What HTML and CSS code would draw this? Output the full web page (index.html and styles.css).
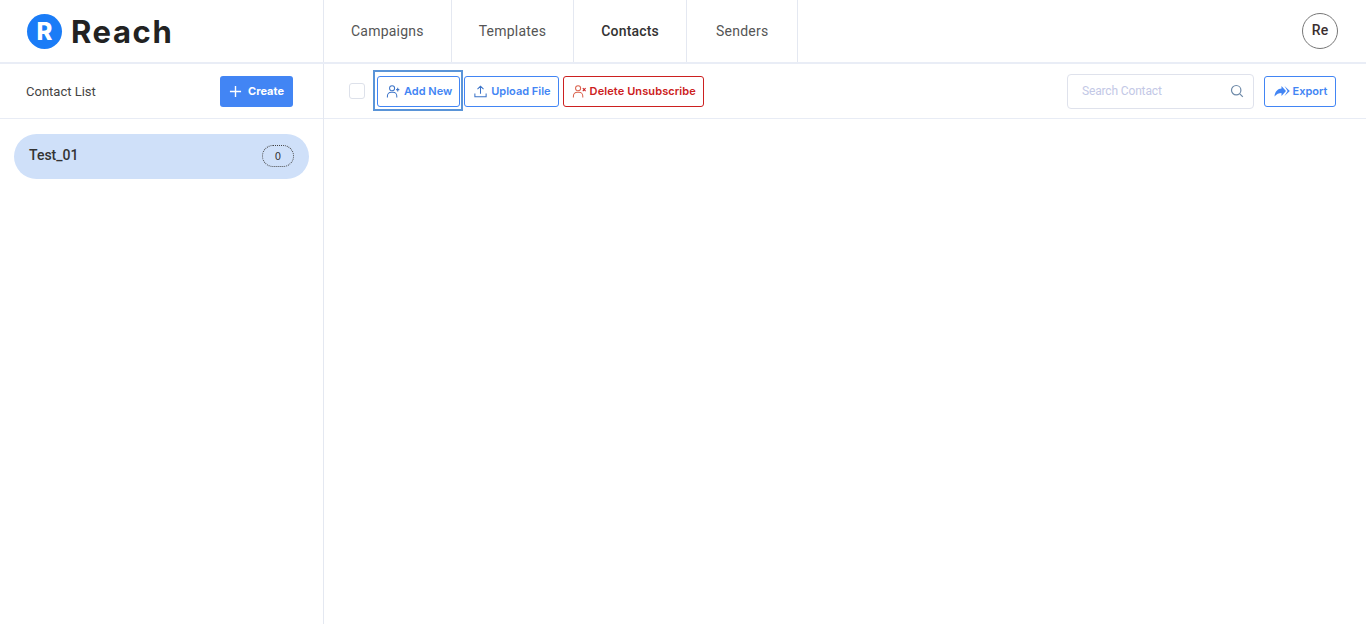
FILE: index.html
```html
<!DOCTYPE html>
<html lang="en">
<head>
<meta charset="utf-8">
<title>Reach Contacts</title>
<link rel="stylesheet" href="styles.css">
</head>
<body>
<header class="topbar">
  <div class="brand">
    <span class="brand-mark">R</span>
    <span class="brand-name">Reach</span>
  </div>
  <nav class="nav">
    <a class="nav-item">Campaigns</a>
    <a class="nav-item">Templates</a>
    <a class="nav-item active">Contacts</a>
    <a class="nav-item">Senders</a>
  </nav>
  <div class="avatar">Re</div>
</header>
<main class="main">
  <aside class="sidebar">
    <div class="side-head">
      <span class="side-title">Contact List</span>
      <button class="btn-create">
        <svg class="ico-plus" viewBox="0 0 14 14"><path d="M7 1v12M1 7h12"/></svg>
        Create
      </button>
    </div>
    <div class="list">
      <div class="list-item">
        <span class="list-name">Test_01</span>
        <span class="badge">0</span>
      </div>
    </div>
  </aside>
  <section class="content">
    <div class="toolbar">
      <span class="check"></span>
      <span class="focus-ring">
        <button class="btn btn-blue">
          <svg class="ico" viewBox="0 0 16 16"><circle cx="6.5" cy="4.5" r="2.7"/><path d="M1.500 14.500v-1.800a4 4 0 0 1 4-4h2a4 4 0 0 1 4 4v1.800M12.500 4v4M10.800 6h3.400"/></svg>
          Add New
        </button>
      </span>
      <button class="btn btn-blue">
        <svg class="ico" viewBox="0 0 16 16"><path d="M8 10.500V2.500M4.800 5.500 8 2.300l3.200 3.200M2 10v3.500h12V10"/></svg>
        Upload File
      </button>
      <button class="btn btn-red">
        <svg class="ico ico-peach" viewBox="0 0 16 16"><circle cx="6.500" cy="4.500" r="2.700"/><path d="M1.500 14.500v-1.800a4 4 0 0 1 4-4h2a4 4 0 0 1 4 4v1.800"/><path class="x" d="m11.500 4.500 3 3M14.500 4.500l-3 3"/></svg>
        Delete Unsubscribe
      </button>
      <div class="spacer"></div>
      <label class="search">
        <span class="search-text">Search Contact</span>
        <svg class="ico-search" viewBox="0 0 14 14"><circle cx="6.200" cy="6.200" r="4.700"/><path d="m9.800 9.800 3 3"/></svg>
      </label>
      <button class="btn btn-blue btn-export">
        <svg class="ico-export" viewBox="0 0 16 12"><path d="M0.500 11.500C0.800 6.500 4 3.500 7.500 3.500V1L12 6l-4.500 5V8C5 8 2.500 9 0.500 11.500Z"/><path d="M10.500 1 15.800 6l-5.300 5L13.600 6Z"/></svg>
        Export
      </button>
    </div>
  </section>
</main>
</body>
</html>
```
FILE: styles.css
```css
* { box-sizing: border-box; }
html, body { height: 100%; }
body {
  margin: 0;
  background: #fff;
  font-family: Roboto, "Liberation Sans", sans-serif;
  color: #2b2b2b;
  overflow: hidden;
  display: flex;
  flex-direction: column;
}
.topbar {
  height: 64px;
  flex: none;
  display: flex;
  align-items: stretch;
  border-bottom: 2px solid #e9edf6;
}
.brand {
  width: 323px;
  flex: none;
  display: flex;
  align-items: center;
  gap: 9px;
  padding: 1px 0 0 27px;
}
.brand-mark {
  width: 35px;
  height: 35px;
  border-radius: 50%;
  background: #1a7cf7;
  color: #fff;
  font: 800 24px/35px Inter, sans-serif;
  text-align: center;
}
.brand-name {
  font: 700 31px/33px Inter, sans-serif;
  letter-spacing: 1.6px;
  color: #222;
}
.nav { display: flex; border-right: 1px solid #e4e8f1; }
.nav-item {
  display: flex;
  align-items: center;
  padding: 0 27px;
  font-size: 14px;
  letter-spacing: 0.22px;
  color: #555;
  border-left: 1px solid #e4e8f1;
}
.nav-item.active { font-weight: 500; color: #333; letter-spacing: 0.2px; }
.nav-item:last-child { padding: 0 29px; }
.avatar {
  width: 36px;
  height: 36px;
  margin: 13px 28px 0 auto;
  border: 1px solid #777;
  border-radius: 50%;
  font-size: 14px;
  font-weight: 500;
  line-height: 33px;
  text-align: center;
  color: #3b2f2f;
}
.main { flex: 1; display: flex; min-height: 0; }
.sidebar {
  width: 324px;
  flex: none;
  border-right: 1px solid #e4e8f1;
}
.side-head {
  height: 55px;
  display: flex;
  align-items: center;
  justify-content: space-between;
  padding: 0 30px 0 26px;
  border-bottom: 1px solid #e8ecf5;
}
.side-title { font-size: 13px; color: #444; }
.btn-create {
  width: 73px;
  height: 31px;
  display: flex;
  align-items: center;
  justify-content: center;
  gap: 6px;
  padding: 0;
  border: 0;
  border-radius: 3px;
  background: #4285f4;
  color: #fff;
  font: 700 11px Inter, sans-serif;
}
.ico-plus { width: 13px; height: 13px; fill: none; stroke: #fff; stroke-width: 1.500; }
.list { padding: 15px 14px; }
.list-item {
  height: 45px;
  display: flex;
  align-items: center;
  justify-content: space-between;
  padding: 0 15px;
  border-radius: 23px;
  background: #cfe0f9;
}
.list-name { font-size: 14px; font-weight: 500; color: #333; margin-bottom: 3px; }
.badge {
  width: 32px;
  height: 22px;
  margin-bottom: 2px;
  border: 1px dotted #444;
  border-radius: 11px;
  font: 400 10px/21px "DejaVu Sans", sans-serif;
  text-align: center;
  color: #333;
}
.content { flex: 1; min-width: 0; }
.toolbar {
  height: 55px;
  display: flex;
  align-items: center;
  padding: 0 30px 0 25px;
  border-bottom: 1px solid #e8ecf5;
}
.check {
  width: 16px;
  height: 16px;
  margin-right: 8px;
  border: 1px solid #dde1ea;
  border-radius: 3px;
}
.focus-ring {
  display: flex;
  height: 41px;
  padding: 1px 3px 0 4px;
  align-items: center;
  outline: 2px solid #5a94d8;
  outline-offset: -2px;
  margin: 0 1px 1px 0;
}
.btn {
  height: 31px;
  display: flex;
  align-items: center;
  gap: 3px;
  padding: 0 7px 0 8px;
  background: #fff;
  border-radius: 3px;
  font: 600 11px Inter, sans-serif;
  white-space: nowrap;
}
.btn-blue { border: 1px solid #4285f4; color: #4285f4; }
.btn-red { border: 1px solid #cc2020; color: #cc2020; margin-left: 4px; letter-spacing: 0.1px; }
.ico { width: 15px; height: 15px; fill: none; stroke: #3b73c8; stroke-width: 1.100; }
.ico-peach { stroke: #d9604a; }
.ico-peach .x { stroke: #cc2020; }
.spacer { flex: 1; }
.search {
  width: 187px;
  height: 35px;
  display: flex;
  align-items: center;
  justify-content: space-between;
  padding: 0 9px 0 14px;
  margin-right: 10px;
  border: 1px solid #dfe2ec;
  border-radius: 4px;
}
.search-text { font-size: 12px; letter-spacing: -0.15px; color: #c3c8e6; }
.ico-search { width: 14px; height: 14px; fill: none; stroke: #6d89a8; stroke-width: 1.200; }
.btn-export { width: 72px; justify-content: center; }
.ico-export { width: 16px; height: 12px; fill: #4285f4; }
```
